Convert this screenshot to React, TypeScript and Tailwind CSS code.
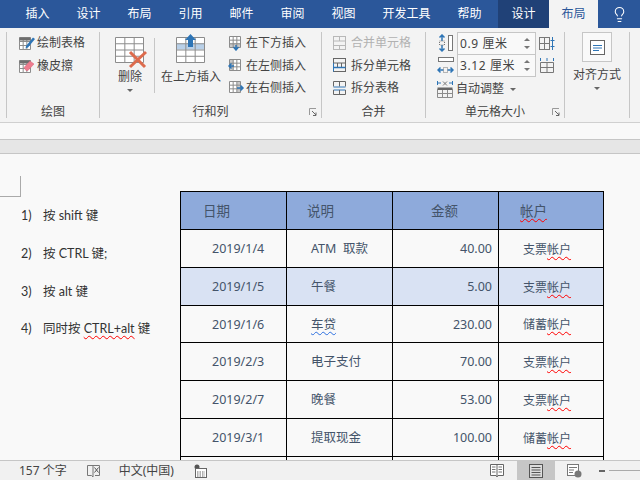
import type { ReactNode } from 'react';
import { Lightbulb } from 'lucide-react';

const TABS = [
  { label: '插入', w: 'w-[51px]' },
  { label: '设计', w: 'w-[51px]' },
  { label: '布局', w: 'w-[51px]' },
  { label: '引用', w: 'w-[51px]' },
  { label: '邮件', w: 'w-[51px]' },
  { label: '审阅', w: 'w-[51px]' },
  { label: '视图', w: 'w-[51px]' },
  { label: '开发工具', w: 'w-[75px]' },
  { label: '帮助', w: 'w-[51px]' },
];

const ROWS = [
  { date: '2019/1/4', desc: 'ATM  取款', amount: '40.00', acct: '支票', h: 'h-[38px]' },
  { date: '2019/1/5', desc: '午餐', amount: '5.00', acct: '支票', h: 'h-[38px]', hi: true },
  { date: '2019/1/6', desc: '车贷', amount: '230.00', acct: '储蓄', h: 'h-[37px]', wavy: true },
  { date: '2019/2/3', desc: '电子支付', amount: '70.00', acct: '支票', h: 'h-[38px]' },
  { date: '2019/2/7', desc: '晚餐', amount: '53.00', acct: '支票', h: 'h-[38px]' },
  { date: '2019/3/1', desc: '提取现金', amount: '100.00', acct: '储蓄', h: 'h-[38px]' },
  { date: '', desc: '', amount: '', acct: '', h: 'h-[38px]' },
];

const LIST = [
  { n: '1)', text: <>按 shift 键</> },
  { n: '2)', text: <>按 CTRL 键;</> },
  { n: '3)', text: <>按 alt 键</> },
  {
    n: '4)',
    text: (
      <>
        同时按 <span className="underline decoration-wavy decoration-[#ff0000] decoration-1 underline-offset-2">CTRL+alt</span> 键
      </>
    ),
  },
];

function Grid({ x, y, w, h, cols, rows, color = '#8c8c8c' }: { x: number; y: number; w: number; h: number; cols: number; rows: number; color?: string }) {
  const lines = [];
  for (let i = 0; i <= cols; i++) {
    const px = x + (w * i) / cols;
    lines.push(<line key={'c' + i} x1={px} y1={y} x2={px} y2={y + h} />);
  }
  for (let i = 0; i <= rows; i++) {
    const py = y + (h * i) / rows;
    lines.push(<line key={'r' + i} x1={x} y1={py} x2={x + w} y2={py} />);
  }
  return (
    <g stroke={color} strokeWidth="1" fill="none">
      {lines}
    </g>
  );
}

function Caret() {
  return <span className="block w-0 h-0 border-x-[3.5px] border-x-transparent border-t-[3.5px] border-t-[#666]" />;
}

function Launcher() {
  return (
    <svg width="8" height="8" viewBox="0 0 8 8" className="justify-self-end mr-[4px]">
      <path d="M0.5 7V0.5H7" stroke="#999" fill="none" />
      <path d="M3 3L7 7M7 4.5V7.5H4" stroke="#666" fill="none" />
    </svg>
  );
}

function Group({ w, label, launcher, children }: { w: string; label: string; launcher?: boolean; children: ReactNode }) {
  return (
    <div className={`${w} h-[86px] shrink-0 flex flex-col border-r border-[#c6c6c6]`}>
      <div className="h-[74px] shrink-0 flex">{children}</div>
      <div className="h-[12px] shrink-0 grid grid-cols-[1fr_auto_1fr] items-center text-[12px] leading-[12px] text-[#444]">
        <span />
        <span>{label}</span>
        {launcher ? <Launcher /> : <span />}
      </div>
    </div>
  );
}

function Small({ icon, label, gap, disabled }: { icon: ReactNode; label: string; gap: string; disabled?: boolean }) {
  return (
    <div className={`h-[22.5px] flex items-center ${gap} text-[12px] ${disabled ? 'text-[#b1b1b1]' : 'text-[#444]'}`}>
      {icon}
      <span>{label}</span>
    </div>
  );
}

function PencilTable() {
  return (
    <svg width="16" height="16" viewBox="0 0 16 16">
      <rect x="0.5" y="2.5" width="11" height="12" fill="#fff" />
      <Grid x={0.5} y={2.5} w={11} h={12} cols={3} rows={3} />
      <rect x="0.5" y="2.5" width="11" height="3" fill="#6d6d6d" />
      <path d="M7 11L14 2.5l2 1.5L9 12.5l-2.5 1z" fill="#2e75b6" />
    </svg>
  );
}

function Eraser() {
  return (
    <svg width="16" height="16" viewBox="0 0 16 16">
      <rect x="0.5" y="2.5" width="11" height="12" fill="#fff" />
      <Grid x={0.5} y={2.5} w={11} h={12} cols={3} rows={3} />
      <rect x="0.5" y="2.5" width="11" height="3" fill="#6d6d6d" />
      <path d="M5 9.5L11 3l4 3-6 6.5H7z" fill="#ee7c8e" stroke="#d9657a" strokeWidth="0.5" />
    </svg>
  );
}

function DeleteIcon() {
  return (
    <svg width="33" height="32" viewBox="0 0 33 32">
      <rect x="0.5" y="0.5" width="28" height="25" fill="#fff" />
      <Grid x={0.5} y={0.5} w={28} h={25} cols={3} rows={4} />
      <path d="M15 15L30 30M31 15L15 30" stroke="#dd6b4d" strokeWidth="3" />
    </svg>
  );
}

function InsertAbove() {
  return (
    <svg width="30" height="29" viewBox="0 0 30 29">
      <rect x="0.5" y="3.5" width="28" height="25" fill="#fff" />
      <rect x="0.5" y="9.5" width="28" height="6" fill="#b9d0e8" />
      <Grid x={0.5} y={3.5} w={28} h={25} cols={3} rows={4} />
      <path d="M14.5 0L20 6H17V13H12V6H9z" fill="#2e75b6" />
    </svg>
  );
}

function InsertSmall({ dir }: { dir: 'down' | 'left' | 'right' }) {
  const arrow = {
    down: 'M8 10v4M5.5 12L8 15l2.5-3',
    left: 'M6 8H1M3.5 5.5L1 8l2.5 2.5',
    right: 'M9 8h6M12.5 5.5L15 8l-2.5 2.5',
  }[dir];
  const shade = { down: [1.5, 8, 11, 4], left: [1.5, 1.5, 4, 11], right: [9, 1.5, 4, 11] }[dir];
  return (
    <svg width="17" height="16" viewBox="0 0 17 16">
      <rect x="1.5" y="1.5" width="11" height="11" fill="#fff" />
      <rect x={shade[0]} y={shade[1]} width={shade[2]} height={shade[3]} fill="#c9c9c9" />
      <Grid x={1.5} y={1.5} w={11} h={11} cols={3} rows={3} />
      <path d={arrow} stroke="#2e75b6" strokeWidth="1.5" fill="none" />
    </svg>
  );
}

function MergeIcon({ kind }: { kind: 'merge' | 'splitCell' | 'splitTable' }) {
  const dark = kind === 'merge' ? '#b8b8b8' : '#666';
  const blue = kind === 'merge' ? '#b8b8b8' : '#2e75b6';
  return (
    <svg width="14" height="15" viewBox="0 0 14 15">
      {kind === 'merge' && (
        <g fill="none" stroke={dark}>
          <rect x="0.5" y="0.5" width="12" height="13" />
          <path d="M0.5 5H12.5M0.5 9.5H12.5M6.5 0.5V5M6.5 9.5V13.5" />
        </g>
      )}
      {kind === 'splitCell' && (
        <g fill="none" stroke={dark}>
          <rect x="0.5" y="0.5" width="12" height="13" />
          <path d="M0.5 5H12.5M4.5 5V9.5M8.5 5V9.5" />
          <path d="M0.5 9.5H12.5" stroke={blue} strokeWidth="1.5" />
          <path d="M0.5 5V13.5" stroke={blue} />
        </g>
      )}
      {kind === 'splitTable' && (
        <g fill="none" stroke={dark}>
          <path d="M0.5 5.5V0.5H12.5V5.5M6.5 0.5V5.5" />
          <path d="M0.5 6H12.5" stroke={blue} />
          <path d="M0.5 9H12.5" stroke={blue} />
          <path d="M0.5 9V13.5H12.5V9M6.5 9V13.5" />
        </g>
      )}
    </svg>
  );
}

function HeightIcon() {
  return (
    <svg width="17" height="19" viewBox="0 0 17 19">
      <rect x="11.5" y="1.5" width="4" height="15" fill="#fff" stroke="#777" />
      <path d="M5 1v16M2.5 3.5L5 1l2.5 2.5M2.5 14.5L5 17l2.5-2.5" stroke="#2e75b6" strokeWidth="1.5" fill="none" />
      <rect x="2.5" y="7" width="5" height="4" fill="#f3f3f3" stroke="#777" strokeDasharray="1 1" />
    </svg>
  );
}

function WidthIcon() {
  return (
    <svg width="17" height="19" viewBox="0 0 17 19">
      <rect x="1.5" y="1.5" width="15" height="4" fill="#fff" stroke="#777" />
      <path d="M1 14h15M3.5 11.5L1 14l2.5 2.5M13.5 11.5L16 14l-2.5 2.5" stroke="#2e75b6" strokeWidth="1.5" fill="none" />
      <rect x="6.5" y="11.5" width="4" height="5" fill="#f3f3f3" stroke="#777" strokeDasharray="1 1" />
    </svg>
  );
}

function AutoFit() {
  return (
    <svg width="16" height="17" viewBox="0 0 16 17">
      <Grid x={0.5} y={8.5} w={15} h={8} cols={3} rows={2} />
      <rect x="0.5" y="6.5" width="15" height="2.5" fill="#666" />
      <path d="M0.5 0v4M15.5 0v4M1 2h3M12 2h3" stroke="#2e75b6" />
      <path d="M6 0.5l4 4M10 0.5l-4 4" stroke="#777" />
    </svg>
  );
}

function DistIcon({ kind }: { kind: 'rows' | 'cols' }) {
  return kind === 'rows' ? (
    <svg width="17" height="15" viewBox="0 0 17 15">
      <rect x="0.5" y="1.5" width="10" height="12" fill="none" stroke="#777" />
      <path d="M0.5 7.5H10.5M5.5 1.5V13.5" stroke="#777" />
      <path d="M13.5 1v13M11.5 4.5h4M11.5 10.5h4" stroke="#2e75b6" />
    </svg>
  ) : (
    <svg width="17" height="15" viewBox="0 0 17 15">
      <path d="M1.5 4.5h13v10h-13zM1.5 9.5h13M8 4.5v10" stroke="#777" fill="none" />
      <path d="M1.5 0v3M8 0v3M14.5 0v3" stroke="#2e75b6" />
    </svg>
  );
}

function Spin({ value }: { value: string }) {
  return (
    <div className="w-[79px] h-[23px] border border-[#c6c6c6] bg-[#f9f9f9] flex items-center justify-between pl-[2px] pr-[5px] text-[12px] tracking-[0.6px] text-[#444]">
      <span>{value}</span>
      <span className="flex flex-col gap-[5px]">
        <span className="block w-0 h-0 border-x-[3px] border-x-transparent border-b-[3px] border-b-[#777]" />
        <span className="block w-0 h-0 border-x-[3px] border-x-transparent border-t-[3px] border-t-[#777]" />
      </span>
    </div>
  );
}

function AlignIcon() {
  return (
    <svg width="15" height="15" viewBox="0 0 15 15">
      <rect x="0.5" y="0.5" width="14" height="14" fill="#fff" stroke="#666" />
      <path d="M3 5.5h9M3 8h9M3 10.5h6" stroke="#2e75b6" />
    </svg>
  );
}

function Acct({ kind }: { kind: string }) {
  return (
    <>
      {kind}
      <span className="underline decoration-wavy decoration-[#ff0000] decoration-1 underline-offset-2">帐户</span>
    </>
  );
}

function StatusIcon({ kind }: { kind: 'proof' | 'macro' | 'read' | 'print' | 'web' }) {
  if (kind === 'proof')
    return (
      <svg width="15" height="14" viewBox="0 0 15 14">
        <path d="M7 1.5H1.5V11.5H5.5L7 13V1.5H13.5V11.5H9" fill="none" stroke="#777" />
        <path d="M8.5 3.5l4 5M12.5 3.5l-4 5" stroke="#555" />
      </svg>
    );
  if (kind === 'macro')
    return (
      <svg width="13" height="14" viewBox="0 0 13 14">
        <circle cx="3" cy="3" r="2.5" fill="#555" />
        <rect x="1.5" y="4.5" width="11" height="9" fill="#fff" stroke="#666" />
        <path d="M3 8h8M3 10h8M3 12h8" stroke="#666" strokeDasharray="1.5 1" />
      </svg>
    );
  if (kind === 'read')
    return (
      <svg width="14" height="15" viewBox="0 0 14 15">
        <path d="M0.5 1.5H13.5V12.5H8L7 14 6 12.5H0.5zM7 1.5V13" fill="#fff" stroke="#666" />
        <path d="M2 4h3.5M2 6.5h3.5M2 9h3.5M8.5 4H12M8.5 6.5H12M8.5 9H12" stroke="#777" />
      </svg>
    );
  if (kind === 'print')
    return (
      <svg width="14" height="14" viewBox="0 0 14 14">
        <rect x="0.5" y="0.5" width="13" height="13" fill="#dcdcdc" stroke="#555" />
        <path d="M2.5 3.5h9M2.5 6h9M2.5 8.5h9M2.5 11h9" stroke="#555" />
      </svg>
    );
  return (
    <svg width="15" height="14" viewBox="0 0 15 14">
      <rect x="0.5" y="0.5" width="11" height="11" fill="#fff" stroke="#777" />
      <path d="M2 3.5h8M2 6h5M2 8.5h4" stroke="#777" />
      <circle cx="11" cy="10" r="3.5" fill="#777" />
    </svg>
  );
}

export default function App() {
  return (
    <div className="w-[640px] h-[480px] overflow-hidden flex flex-col bg-[#f9f9f9] font-['Noto_Sans','Noto_Sans_CJK_SC',sans-serif]">
      {/* tabs */}
      <div className="h-[28px] shrink-0 bg-[#2b579a] flex pl-[12px] text-[12px] text-white">
        {TABS.map((t) => (
          <div key={t.label} className={`${t.w} shrink-0 flex items-center justify-center`}>
            {t.label}
          </div>
        ))}
        <div className="w-[51px] ml-[3px] shrink-0 bg-[#204177] flex items-center justify-center">设计</div>
        <div className="w-[49px] shrink-0 bg-[#f3f3f3] text-[#2b579a] flex items-center justify-center">布局</div>
        <div className="flex-1 flex items-center justify-center">
          <Lightbulb size={17} strokeWidth={1.5} />
        </div>
      </div>

      {/* ribbon */}
      <div className="h-[95px] shrink-0 bg-[#f3f3f3] border-b border-[#d0d0d0] flex pl-[6px] pt-[4px]">
        <div className="w-0 h-[86px] border-l border-[#c6c6c6]" />
        <Group w="w-[93px]" label="绘图">
          <div className="pl-[12px]">
            <Small icon={<PencilTable />} label="绘制表格" gap="gap-[2px]" />
            <Small icon={<Eraser />} label="橡皮擦" gap="gap-[2px]" />
          </div>
        </Group>
        <Group w="w-[222px]" label="行和列" launcher>
          <div className="w-[48px] ml-[6px] flex flex-col items-center pt-[5px] text-[12px] text-[#444]">
            <div className="h-[32px] pl-[2px]">
              <DeleteIcon />
            </div>
            <span className="leading-[16px]">删除</span>
            <div className="mt-[4px]">
              <Caret />
            </div>
          </div>
          <div className="w-0 h-[55px] mt-[6px] border-l border-[#c6c6c6]" />
          <div className="w-[60px] ml-[6px] flex flex-col items-center pt-[2px] text-[12px] text-[#444]">
            <div className="h-[35px]">
              <InsertAbove />
            </div>
            <span className="leading-[16px]">在上方插入</span>
          </div>
          <div className="ml-[7px]">
            <Small icon={<InsertSmall dir="down" />} label="在下方插入" gap="gap-[1px]" />
            <Small icon={<InsertSmall dir="left" />} label="在左侧插入" gap="gap-[1px]" />
            <Small icon={<InsertSmall dir="right" />} label="在右侧插入" gap="gap-[1px]" />
          </div>
        </Group>
        <Group w="w-[104px]" label="合并">
          <div className="pl-[11px]">
            <Small icon={<MergeIcon kind="merge" />} label="合并单元格" gap="gap-[4px]" disabled />
            <Small icon={<MergeIcon kind="splitCell" />} label="拆分单元格" gap="gap-[4px]" />
            <Small icon={<MergeIcon kind="splitTable" />} label="拆分表格" gap="gap-[4px]" />
          </div>
        </Group>
        <Group w="w-[139px]" label="单元格大小" launcher>
          <div className="pl-[11px] flex flex-col">
            <div className="flex items-center gap-[2px]">
              <HeightIcon />
              <div className="ml-[1px]">
                <Spin value="0.9 厘米" />
              </div>
              <div className="ml-[1px]">
                <DistIcon kind="rows" />
              </div>
            </div>
            <div className="flex items-center gap-[2px] -mt-[1px]">
              <WidthIcon />
              <div className="ml-[1px]">
                <Spin value="3.12 厘米" />
              </div>
              <div className="ml-[1px]">
                <DistIcon kind="cols" />
              </div>
            </div>
            <div className="flex items-center gap-[3px] mt-[1px] h-[22px] text-[12px] text-[#444]">
              <AutoFit />
              <span>自动调整</span>
              <span className="ml-[3px]">
                <Caret />
              </span>
            </div>
          </div>
        </Group>
        <Group w="w-[65px]" label="">
          <div className="w-full flex flex-col items-center text-[12px] text-[#444]">
            <div className="w-[30px] h-[30px] border border-[#c6c6c6] bg-[#f9f9f9] flex items-center justify-center">
              <AlignIcon />
            </div>
            <span className="mt-[5px] leading-[16px]">对齐方式</span>
            <div className="mt-[4px]">
              <Caret />
            </div>
          </div>
        </Group>
      </div>

      {/* ruler area */}
      <div className="h-[16px] shrink-0 bg-[#f9f9f9]" />
      <div className="h-[15px] shrink-0 bg-[#e6e6e6] border-y border-[#c6c6c6]" />

      {/* document */}
      <div className="flex-1 min-h-0 overflow-hidden flex">
        <div className="w-[180px] shrink-0">
          <div className="w-[21px] h-[21px] mt-[22px] border-r border-b border-[#aaa]" />
          {LIST.map((item) => (
            <div key={item.n} className="h-[37.6px] pt-[2px] flex items-center pl-[21px] text-[12.5px] text-[#333] font-['Lato','Noto_Sans_CJK_SC',sans-serif]">
              <span className="w-[22px]">{item.n}</span>
              <span>{item.text}</span>
            </div>
          ))}
        </div>
        <div className="mt-[37px]">
          <table className="table-fixed border-collapse w-[423px] text-[#44546a] text-[12.5px]">
            <tbody>
              <tr className="h-[38px] bg-[#8eaadb] text-[13.5px]">
                <td className="w-[106px] border border-black pl-[22px] pt-[2px]">日期</td>
                <td className="w-[106px] border border-black pl-[20px] pt-[2px]">说明</td>
                <td className="w-[106px] border border-black pl-[38px] pt-[2px]">金额</td>
                <td className="w-[105px] border border-black pl-[21px] pt-[2px]">
                  <span className="underline decoration-wavy decoration-[#ff0000] decoration-1 underline-offset-2">帐户</span>
                </td>
              </tr>
              {ROWS.map((r, i) => (
                <tr key={i} className={`${r.h} ${r.hi ? 'bg-[#d9e2f3]' : ''}`}>
                  <td className="border border-black pl-[31px] pt-[2px]">{r.date}</td>
                  <td className="border border-black pl-[24px] pt-[2px] whitespace-pre">
                    {r.wavy ? <span className="underline decoration-wavy decoration-[#2b6fe0] decoration-1 underline-offset-2">{r.desc}</span> : r.desc}
                  </td>
                  <td className="border border-black pr-[6px] pt-[2px] text-right">{r.amount}</td>
                  <td className="border border-black pl-[24px] pt-[2px] text-[12px]">{r.acct && <Acct kind={r.acct} />}</td>
                </tr>
              ))}
            </tbody>
          </table>
        </div>
      </div>

      {/* status bar */}
      <div className="h-[20px] shrink-0 bg-[#f1f1f1] border-t border-[#c6c6c6] flex items-center text-[12px] text-[#444]">
        <span className="ml-[19px]">157 个字</span>
        <span className="ml-[19px]">
          <StatusIcon kind="proof" />
        </span>
        <span className="ml-[18px]">中文(中国)</span>
        <span className="ml-[20px]">
          <StatusIcon kind="macro" />
        </span>
        <div className="flex-1" />
        <StatusIcon kind="read" />
        <div className="w-[38px] h-full ml-[13px] bg-[#c6c6c6] flex items-center justify-center">
          <StatusIcon kind="print" />
        </div>
        <span className="ml-[12px]">
          <StatusIcon kind="web" />
        </span>
        <div className="w-[6px] h-[2px] bg-[#666] ml-[17px]" />
        <div className="w-[31px] h-px bg-[#aaa] ml-[4px]" />
      </div>
    </div>
  );
}
